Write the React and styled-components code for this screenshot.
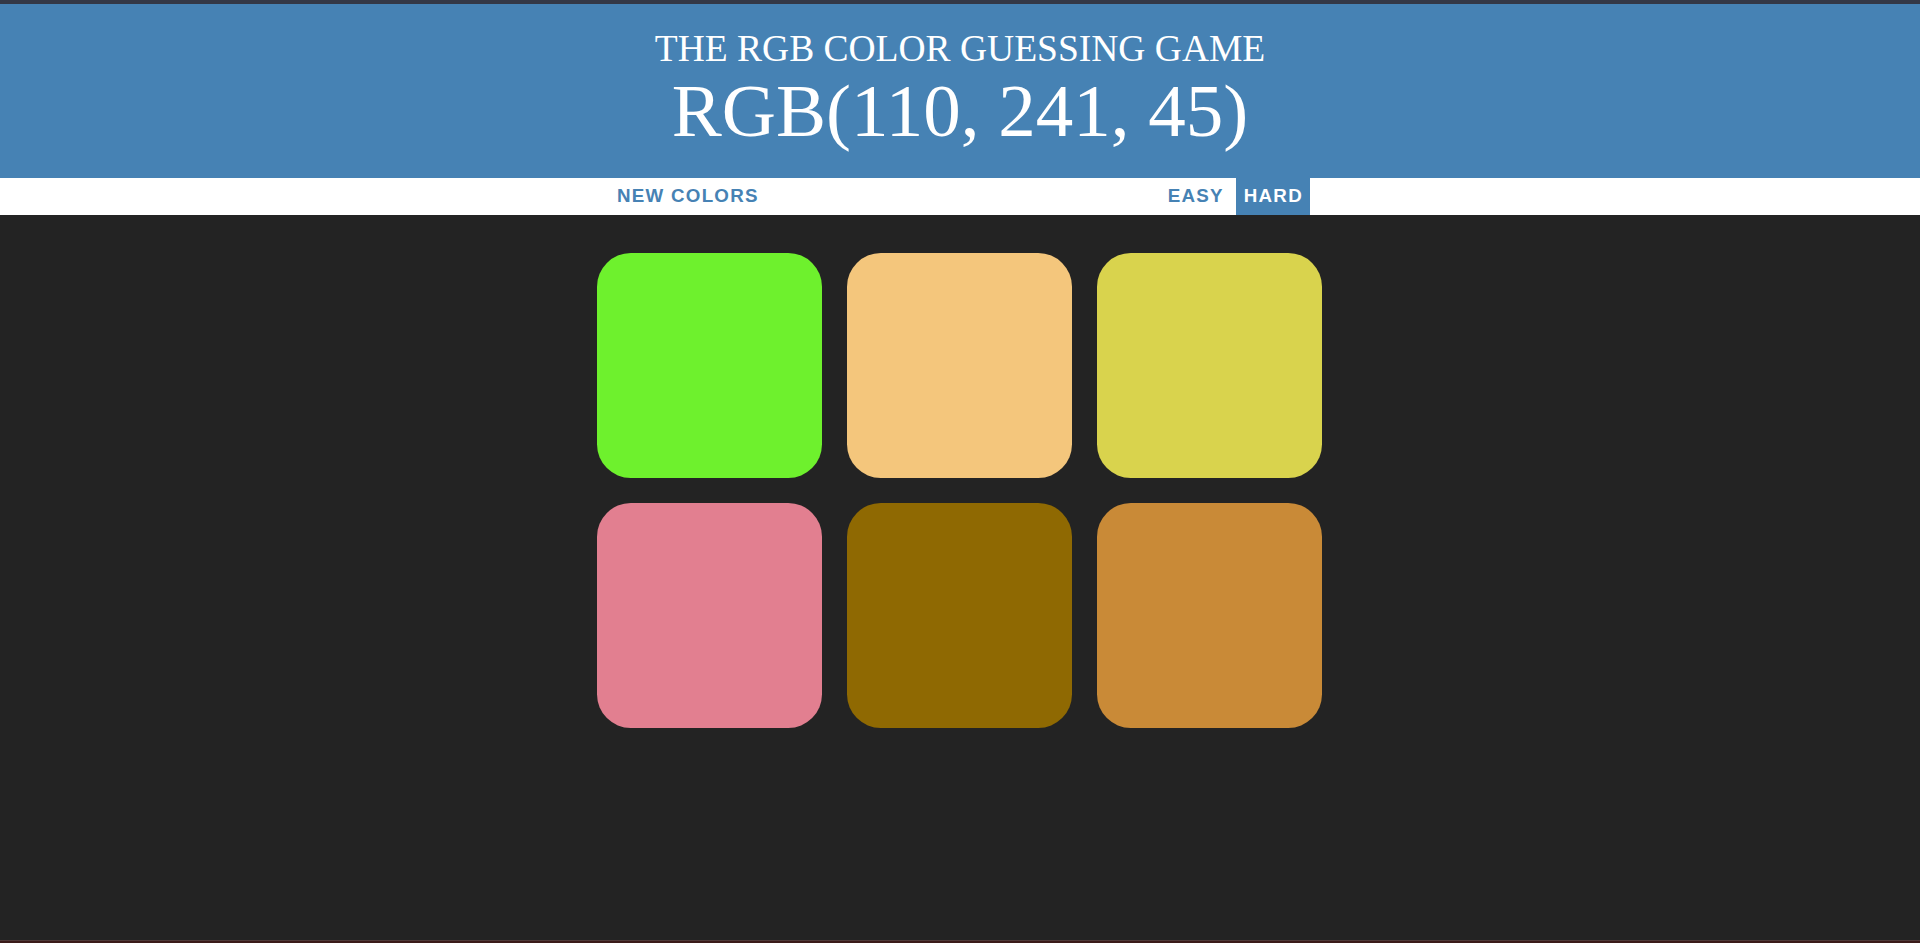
import React from "react";
import styled, { createGlobalStyle } from "styled-components";

const GlobalStyle = createGlobalStyle`
  html, body {
    margin: 0;
    padding: 0;
    background: #232323;
  }
  * { box-sizing: border-box; }
`;

const Page = styled.div`
  min-height: 100vh;
  display: flex;
  flex-direction: column;
  background: #232323;
`;

const TopEdge = styled.div`
  height: 4px;
  background: #343846;
  flex: none;
`;

const BottomEdge = styled.div`
  height: 3px;
  background: #3b1b1a;
  border-top: 1px solid #4f3a38;
  flex: none;
`;

const Header = styled.h1`
  margin: 0;
  padding: 24px 0 26px;
  background: #4682b4;
  color: #ffffff;
  text-align: center;
  font-family: "Liberation Serif", "Times New Roman", serif;
  font-weight: normal;
  text-transform: uppercase;
  flex: none;
`;

const Title = styled.div`
  font-size: 37.5px;
  line-height: 41px;
`;

const ColorDisplay = styled.div`
  font-size: 75px;
  line-height: 83px;
`;

const Stripe = styled.div`
  height: 37px;
  background: #ffffff;
  display: flex;
  justify-content: center;
  align-items: stretch;
  gap: 5px;
  flex: none;
`;

const StripeButton = styled.button`
  border: none;
  margin: 0;
  padding: 0 7.5px 1px;
  height: 100%;
  background: ${(p) => (p.$selected ? "#4682b4" : "transparent")};
  color: ${(p) => (p.$selected ? "#ffffff" : "#4682b4")};
  font-family: "Liberation Sans", Arial, sans-serif;
  font-size: 18.75px;
  font-weight: 700;
  letter-spacing: 1.25px;
  text-transform: uppercase;
  cursor: pointer;
  outline: none;
`;

const Message = styled.span`
  display: inline-block;
  width: 20%;
  flex: none;
`;

const Board = styled.div`
  width: 750px;
  max-width: 100%;
  margin: 26px auto 0;
  display: flex;
  flex-wrap: wrap;
`;

const Square = styled.div`
  width: 30%;
  aspect-ratio: 1 / 1;
  margin: 1.66%;
  border-radius: 15%;
  background: ${(p) => p.$color};
`;

const Spacer = styled.div`
  flex: 1;
`;

const colors = [
  "rgb(110, 241, 45)",
  "#f4c67c",
  "#d9d34d",
  "#e27f90",
  "#8f6902",
  "#c98a37",
];

export default function App() {
  return (
    <>
      <GlobalStyle />
      <Page>
        <TopEdge />
        <Header>
          <Title>The RGB Color Guessing Game</Title>
          <ColorDisplay>RGB(110, 241, 45)</ColorDisplay>
        </Header>
        <Stripe>
          <StripeButton>New Colors</StripeButton>
          <Message />
          <StripeButton>Easy</StripeButton>
          <StripeButton $selected>Hard</StripeButton>
        </Stripe>
        <Board>
          {colors.map((c, i) => (
            <Square key={i} $color={c} />
          ))}
        </Board>
        <Spacer />
        <BottomEdge />
      </Page>
    </>
  );
}
